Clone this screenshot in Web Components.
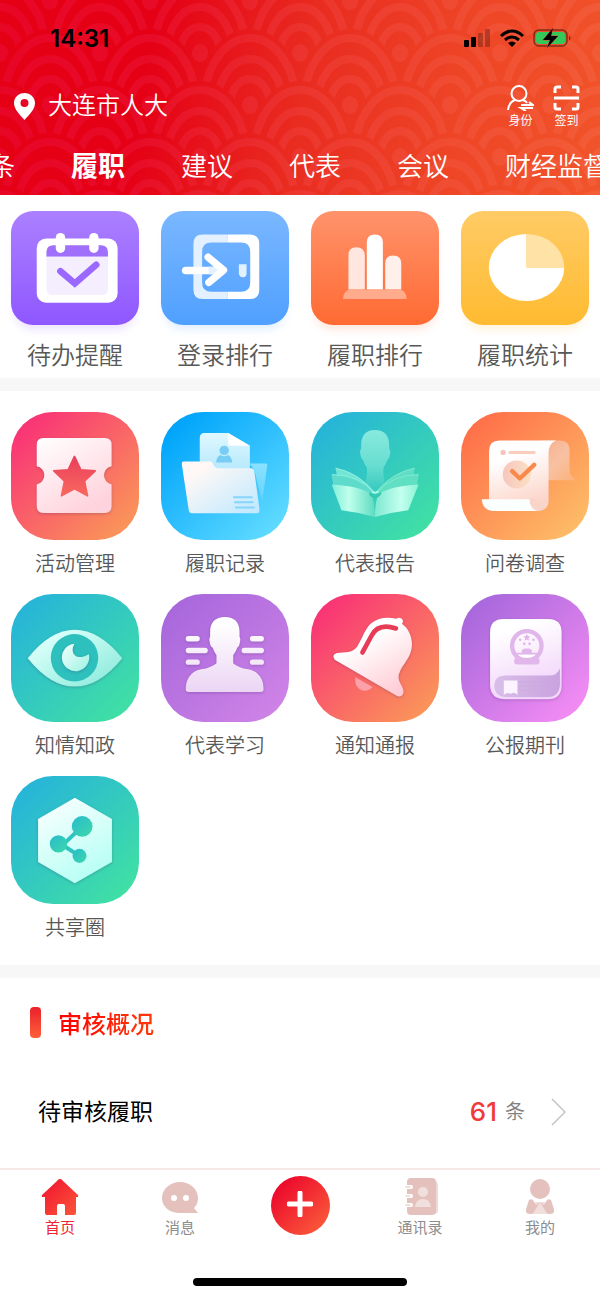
<!DOCTYPE html>
<html lang="zh-CN">
<head>
<meta charset="utf-8">
<meta name="viewport" content="width=device-width, initial-scale=1">
<title>大连市人大</title>
<style>
  body {
    margin: 0;
    background: #fff;
    color: #585858;
    font-family: "Inter", "Noto Sans CJK SC", sans-serif;
  }
</style>
</head>
<body>
<home-page></home-page>

<script>
// Tile artwork. Each entry has its own view box, tile colours and drawing.
const ICONS = {
  todo: {
    box: "34 32 383 343", from: "#ab80ff", to: "#8f57ff",
    art: `
      <rect x="111" y="115" width="242" height="193" rx="28" fill="#fff"/>
      <path d="M140 170v-14q0-21 21-21h142q21 0 21 21v14z" fill="#a06ffc"/>
      <path d="M140 170h184v96q0 19-19 19H159q-19 0-19-19z" fill="#f4eeff"/>
      <rect x="168" y="98" width="28" height="60" rx="14" fill="#fff"/>
      <rect x="268" y="98" width="28" height="60" rx="14" fill="#fff"/>
      <path d="M182 213l43 37 64-56" fill="none" stroke="#9b69ff" stroke-width="20" stroke-linecap="round"/>`
  },
  login: {
    box: "484 32 383 343", from: "#7ab7ff", to: "#4fa0ff",
    art: `
      <path fill-rule="evenodd" d="M684 103h-75q-28 0-28 28v138q0 28 28 28h75v-22h-49q-28 0-28-28v-92q0-28 28-28h49z" fill="#e3f0ff"/>
      <path d="M684 103h66q28 0 28 28v138q0 28-28 28h-66v-22h39q28 0 28-28v-92q0-28-28-28h-39z" fill="#fff"/>
      <path d="M558 211h105" stroke="#fff" stroke-width="23" stroke-linecap="round"/>
      <path d="M626 211h30" stroke="#e3f0ff" stroke-width="23"/>
      <path d="M625 171l46 39-44 37" fill="none" stroke="#fff" stroke-width="22" stroke-linecap="round" stroke-linejoin="round"/>
      <path d="M717 192h23v28q0 11-11 11t-12-11z" fill="#e3f0ff"/>`
  },
  rank: {
    box: "34 32 383 343", from: "#ff936b", to: "#ff6a33",
    art: `
      <path d="M146 268V165q0-24 24-24t25 24v103z" fill="#ffe7e0"/>
      <path d="M201 268V127q0-24 24-24t24 24v141z" fill="#fff"/>
      <path d="M256 268v-78q0-24 24-24t24 24v78z" fill="#fff0eb"/>
      <path d="M130 297q0-29 26-29h138q26 0 26 29z" fill="#ffab8c"/>`
  },
  stats: {
    box: "484 32 383 343", from: "#ffcb66", to: "#ffbb30",
    art: `
      <path d="M680 202V101A113 101 0 1 0 793 202z" fill="#fff"/>
      <path d="M680 202V101A113 101 0 0 1 793 202z" fill="#ffe2a6"/>`
  },
  ticket: {
    box: "34 36 383 383", from: "#f93476", to: "#fa9459",
    art: `
      <defs>
        <linearGradient id="a" x1="0" y1="0" x2=".6" y2="1"><stop stop-color="#fff"/><stop offset="1" stop-color="#ffd3dd"/></linearGradient>
        <linearGradient id="b" x1="0" y1="0" x2="0" y2="1"><stop stop-color="#ea3f5b"/><stop offset="1" stop-color="#f8685f"/></linearGradient>
      </defs>
      <path class="lift" d="M131 114h184q20 0 20 20v64a28 28 0 0 0 0 55v65q0 20-20 20H131q-20 0-20-20v-65a28 28 0 0 0 0-55v-64q0-20 20-20z" fill="url(#a)"/>
      <path d="M224 169l19 40 43 3-32 31 9 44-39-21-39 21 9-44-32-31 43-3z" fill="url(#b)" stroke="url(#b)" stroke-width="5" stroke-linejoin="round"/>`
  },
  folder: {
    box: "484 36 383 383", from: "#00a4fb", to: "#5edaff",
    art: `
      <defs>
        <linearGradient id="a" x1="0" y1="0" x2="1" y2="1"><stop offset=".2" stop-color="#fff8f6"/><stop offset="1" stop-color="#bde8ff"/></linearGradient>
        <linearGradient id="b" x1="0" y1="0" x2="0" y2="1"><stop stop-color="#dff8ff"/><stop offset="1" stop-color="#b4e8fd"/></linearGradient>
        <linearGradient id="c" x1="0" y1="0" x2="0" y2="1"><stop stop-color="#8be2ff"/><stop offset="1" stop-color="#63d0fc"/></linearGradient>
      </defs>
      <path d="M749 190h49q5 0 4 6l-15 109-24-96z" fill="url(#c)"/>
      <path d="M600 215V113q0-14 14-14h71l65 38v80z" fill="url(#b)"/>
      <path d="M685 99l65 38h-60q-5 0-5-5z" fill="#fff"/>
      <circle cx="673" cy="151" r="14" fill="#78cdf4"/>
      <path d="M649 187q1-17 13-22 11 7 22 0 12 5 13 22z" fill="#78cdf4"/>
      <path d="M552 184h78q7 0 9 6 5 14 18 14h97q8 0 9 8l16 117q0 10-9 10H577q-9 0-10-9l-21-139q0-7 6-7z" fill="url(#a)"/>
      <path d="M700 291h58M703 306h58M706 322h58" stroke="#86d5fb" stroke-width="6"/>`
  },
  report: {
    box: "34 36 383 383", from: "#27b5d8", to: "#40dfa5",
    art: `
      <defs>
        <linearGradient id="a" x1="0" y1="0" x2="0" y2="1"><stop stop-color="#88eadf"/><stop offset=".6" stop-color="#66dcd0"/><stop offset="1" stop-color="#35c9be"/></linearGradient>
        <linearGradient id="b" x1="0" y1="0" x2="1" y2="0"><stop stop-color="#81efd9"/><stop offset=".4" stop-color="#c0ffec"/><stop offset="1" stop-color="#5edcc1"/></linearGradient>
        <linearGradient id="c" x1="0" y1="0" x2="1" y2="0"><stop stop-color="#7de9d2"/><stop offset=".6" stop-color="#c4ffee"/><stop offset="1" stop-color="#88f3d3"/></linearGradient>
      </defs>
      <path d="M225 90c29 0 43 17 43 45v12q5 4 2 17-1 12-8 16-3 12-11 22-2 22 2 35 7 17-27 38-34-21-27-38 4-13 2-35-8-10-11-22-7-4-8-16-3-13 2-17v-12c0-28 14-45 41-45z" fill="url(#a)"/>
      <path d="M107 203q67 14 113 69l-8 10-97-40z" fill="#72e6d4"/>
      <path d="M345 203q-67 14-113 69l8 10 97-40z" fill="#60dec4"/>
      <path d="M95 222q80 2 126 54l-10 14-110-35z" fill="#5edbca"/>
      <path d="M357 222q-80 2-126 54l10 14 110-35z" fill="#61dfc3"/>
      <path d="M97 223q80 2 125 54M108 204q67 14 113 69" fill="none" stroke="#a2f6e9" stroke-width="2"/>
      <path d="M355 223q-80 2-125 54M344 204q-67 14-113 69" fill="none" stroke="#8df2d9" stroke-width="2"/>
      <path d="M96 253q82 5 116 27 12 12 13 70-50-14-100-20z" fill="url(#b)"/>
      <path d="M356 253q-82 5-116 27-14 12-15 70 50-14 100-20z" fill="url(#c)"/>
      <path d="M211 277q1 12 14 12t17-12" fill="none" stroke="#35c8ac" stroke-width="7"/>
      <path d="M217 274q8 7 18 0" fill="none" stroke="#b9fff0" stroke-width="6"/>`
  },
  survey: {
    box: "484 36 383 383", from: "#ff704a", to: "#fdbb66",
    art: `
      <defs>
        <linearGradient id="a" x1="0" y1="0" x2=".3" y2="1"><stop offset=".3" stop-color="#fff"/><stop offset="1" stop-color="#fcd5ca"/></linearGradient>
        <linearGradient id="b" x1="0" y1="0" x2="1" y2="1"><stop stop-color="#f5ae8c"/><stop offset=".5" stop-color="#f8c1a2"/><stop offset="1" stop-color="#fdb077"/></linearGradient>
        <linearGradient id="c" x1="0" y1="0" x2="1" y2="0"><stop stop-color="#f7c6be"/><stop offset="1" stop-color="#fbe0c4"/></linearGradient>
      </defs>
      <path d="M720 121h60q29 0 29 30v56q0 25 24 33h-88z" fill="url(#b)"/>
      <path d="M568 298V152q0-31 31-31h170q-23 8-23 38v140q0 33-34 33h-72z" fill="url(#a)"/>
      <path d="M546 297h143q0 25 23 35H578q-29-2-32-35z" fill="#fbfffd"/>
      <path d="M690 297q2 34 25 34 29-1 31-31-26 17-40-3-8-6-16 0z" fill="#f9d4c9"/>
      <circle cx="610" cy="157" r="8" fill="#f9c4bb"/>
      <path d="M630 157h73" stroke="#f9cebd" stroke-width="9" stroke-linecap="round"/>
      <circle cx="651" cy="223" r="42" fill="url(#c)"/>
      <path d="M637 213l23 22 43-41" fill="none" stroke="#f88a4d" stroke-width="13" stroke-linecap="round" stroke-linejoin="round"/>`
  },
  eye: {
    box: "34 25 383 383", from: "#27b5d8", to: "#40dfa5",
    art: `
      <defs>
        <linearGradient id="a" x1="0" y1="0" x2="1" y2="1"><stop offset=".2" stop-color="#d8fff9"/><stop offset="1" stop-color="#82e8d8"/></linearGradient>
        <linearGradient id="b" x1="0" y1="0" x2="1" y2="1"><stop stop-color="#f3ffff"/><stop offset="1" stop-color="#9df3e1"/></linearGradient>
      </defs>
      <path class="lift" d="M84 217q68-85 141-85t142 85q-69 85-142 85T84 217z" fill="url(#a)"/>
      <circle cx="224" cy="216" r="71" fill="#2dc0bd"/>
      <path class="lift" d="M224 174q-12 21 1 34t42-3a41 41 0 1 1-43-31z" fill="url(#b)"/>`
  },
  study: {
    box: "484 25 383 383", from: "#a868dc", to: "#ce82e6",
    art: `
      <defs>
        <linearGradient id="a" gradientUnits="userSpaceOnUse" x1="0" y1="95" x2="0" y2="318"><stop offset=".1" stop-color="#fff"/><stop offset="1" stop-color="#ebd5f4"/></linearGradient>
      </defs>
      <g class="lift" fill="url(#a)">
        <path d="M675 94c29 0 44 16 44 44v15q4 5 1 17-1 12-8 16-3 11-12 22v24q15 14 45 18c33 6 46 31 46 60q0 8-8 8H566q-8 0-8-8c0-29 14-54 46-60q30-4 46-18v-24q-9-11-11-22-8-4-9-16-3-12 1-17v-15c0-28 16-44 44-44z"/>
        <rect x="558" y="151" width="42" height="16" rx="8"/><rect x="750" y="151" width="42" height="16" rx="8"/>
        <rect x="558" y="186" width="66" height="16" rx="8"/><rect x="725" y="186" width="67" height="16" rx="8"/>
        <rect x="558" y="221" width="42" height="16" rx="8"/><rect x="750" y="221" width="42" height="16" rx="8"/>
      </g>`
  },
  bell: {
    box: "34 25 383 383", from: "#f93476", to: "#fa9459",
    art: `
      <defs>
        <linearGradient id="a" x1=".2" y1="0" x2=".8" y2="1"><stop offset=".3" stop-color="#fff"/><stop offset="1" stop-color="#ffc9d3"/></linearGradient>
      </defs>
      <path d="M167 274l51 29q-15 16-34 9-22-11-17-38z" fill="#fca0aa"/>
      <path class="lift" d="M110 202c28-3 48 0 62-19 17-28 23-53 43-71 20-17 48-19 74-13q12-7 19 3 3 7-2 12c21 15 31 40 30 66-2 37-29 54-39 85-7 23 18 37 13 57q-5 15-21 7L105 222q-10-15 5-20z" fill="url(#a)"/>
      <path d="M188 200l27-50c13-26 38-33 73-22" fill="none" stroke="#e73c55" stroke-width="14" stroke-linecap="round"/>`
  },
  gazette: {
    box: "484 25 383 383", from: "#a868dc", to: "#f28bf3",
    art: `
      <defs>
        <linearGradient id="a" x1="0" y1="0" x2=".3" y2="1"><stop offset=".2" stop-color="#fff"/><stop offset="1" stop-color="#f2d4fa"/></linearGradient>
        <linearGradient id="b" x1="0" y1="0" x2="1" y2="0"><stop stop-color="#d9bee9"/><stop offset="1" stop-color="#c9a2de"/></linearGradient>
      </defs>
      <path class="lift" d="M612 100h132q41 0 41 40v158q0 42-41 42H617q-46 0-46-44V140q0-40 41-40z" fill="url(#a)"/>
      <path d="M780 247v50q-4 36-36 36H615q-30-3-32-33 2-31 32-31h132q26 0 33-22z" fill="url(#b)"/>
      <path d="M655 288h120M655 300h120M655 312h120" stroke="#caaadf" stroke-width="2"/>
      <path d="M612 284h41v43q-11-12-20-3-10-7-21 3z" fill="#fbf3ff"/>
      <circle cx="681" cy="180" r="44" fill="none" stroke="#e1b6ea" stroke-width="13"/>
      <path d="M651 216h60q8 0 8 9v3q0 8-8 8h-60q-8 0-8-8v-3q0-9 8-9z" fill="#e1b6ea"/>
      <path d="M653 206q27 20 56 0z" fill="#fff"/>
      <g fill="#e1b6ea">
        <path d="M681 144l3 7 8 1-6 5 2 8-7-4-7 4 2-8-6-5 8-1z"/>
        <circle cx="661" cy="162" r="4"/><circle cx="701" cy="162" r="4"/><circle cx="673" cy="174" r="4"/><circle cx="689" cy="174" r="4"/>
        <path d="M650 206v-5h16v-10h6v-3h18v3h6v10h16v5z"/>
      </g>`
  },
  share: {
    box: "34 30 383 383", from: "#27b5d8", to: "#40dfa5",
    art: `
      <defs>
        <linearGradient id="a" x1="0" y1="0" x2=".5" y2="1"><stop stop-color="#fff"/><stop offset="1" stop-color="#b9fff5"/></linearGradient>
        <linearGradient id="b" x1="0" y1="0" x2="1" y2="1"><stop stop-color="#2abacd"/><stop offset="1" stop-color="#3cd9aa"/></linearGradient>
      </defs>
      <path class="lift" d="M225 95l111 64v128l-111 64-110-64V159z" fill="url(#a)"/>
      <path d="M192 233L247 181M190 238l49 31" stroke="#2fc4c0" stroke-width="12"/>
      <g fill="url(#b)"><circle cx="247" cy="181" r="31"/><circle cx="176" cy="233" r="26"/><circle cx="239" cy="269" r="21"/></g>`
  }
};

const NAV_ICONS = {
  home: `
    <defs><linearGradient id="g" x1="0" y1="0" x2="1" y2="1"><stop stop-color="#f01030"/><stop offset="1" stop-color="#fb5838"/></linearGradient></defs>
    <path d="M19 1q2 0 3 2l15 14q1 2-1 2h-1v16q0 2-2 2h-9V28q0-2-2-2h-4q-2 0-2 2v9H7q-3 0-3-2V19H2q-2 0-1-2L16 3q1-2 3-2z" fill="url(#g)"/>`,
  chat: `
    <path d="M19 4c10 0 18 7 18 16q0 6-4 10l4 5H19C9 35 1 29 1 20S9 4 19 4z" fill="#e4c1bd"/>
    <circle cx="13" cy="20" r="3" fill="#fff"/><circle cx="25" cy="20" r="3" fill="#fff"/>`,
  contacts: `
    <path d="M10 3h23q4 0 4 4v25q0 4-4 4H10z" fill="#eed9d6"/>
    <rect x="6" width="29" height="37" rx="4" fill="#e4c1bd"/>
    <circle cx="22" cy="14" r="5" fill="#f1dfdd"/><path d="M14 29q1-8 8-8t8 8z" fill="#f1dfdd"/>
    <path d="M5 9h5M5 18h5M5 27h5" stroke="#fff" stroke-width="4" stroke-linecap="round"/>
    <path d="M5 9h4M5 18h4M5 27h4" stroke="#e4c1bd" stroke-linecap="round"/>`,
  me: `
    <path d="M14 24h11l5 12H9z" fill="#f1dfdd"/>
    <circle cx="19" cy="11" r="10" fill="#e4c1bd"/>
    <path d="M8 22q4-2 5 2l2 3 4-3-6 10q-1 2-4 2-5 0-4-5zM30 22q-4-2-5 2l-2 3-4-3 6 10q1 2 4 2 5 0 4-5z" fill="#e4c1bd"/>`
};

class StatusBar extends HTMLElement {
  constructor() {
    super();
    this.attachShadow({ mode: "open" }).innerHTML = `
      <style>
        :host {
          display: flex;
          align-items: center;
          justify-content: space-between;
          height: 76px;
          padding: 0 28px 0 50px;
          color: #000;
        }
        .time { font-size: 24px; font-weight: 600; }
        .signals { display: flex; align-items: center; gap: 8px; }
        svg { display: block; }
      </style>
      <span class="time"><slot></slot></span>
      <div class="signals">
        <svg width="27" height="18" viewBox="0 0 27 18">
          <rect y="11" width="5" height="7" rx="1"/><rect x="7" y="8" width="5" height="10" rx="1"/>
          <rect x="14" y="4" width="5" height="14" rx="1" opacity=".25"/><rect x="21" width="5" height="18" rx="1" opacity=".25"/>
        </svg>
        <svg width="26" height="18" viewBox="0 0 26 18">
          <path d="M2 7Q13-3 24 7M6 11q7-6 14 0" fill="none" stroke="#000" stroke-width="3"/>
          <path d="M9 14q4-3 8 0l-4 4z"/>
        </svg>
        <svg width="39" height="20" viewBox="0 0 39 20">
          <rect x="1" y="2" width="33" height="16" rx="5" fill="none" stroke="#000" stroke-opacity=".45" stroke-width="1.5"/>
          <rect x="3" y="4" width="29" height="12" rx="3" fill="#34c759"/>
          <path d="M36 8q3 2 0 5z" opacity=".5"/>
          <path d="M20 0L10 12h7l-3 8 11-12h-7z" stroke="#e94a28" stroke-width="1" paint-order="stroke"/>
        </svg>
      </div>
    `;
  }
}

class AppHeader extends HTMLElement {
  constructor() {
    super();
    // one wave scale: a dark ellipse hides the row behind, then the light rings
    const scale = (x, y) => `
      <g transform="translate(${x} ${y})">
        <ellipse rx="54" ry="76" fill="#000"/>
        <g fill="none" stroke="#fff" stroke-width="8">
          <ellipse rx="46" ry="67"/><ellipse rx="33" ry="46"/><ellipse rx="20" ry="26"/>
        </g>
        <ellipse rx="8" ry="9" fill="#fff"/>
      </g>`;
    let scales = "";
    for (let row = 0; row < 6; row++) {
      for (let x = row % 2 ? 0 : 50; x <= 1500; x += 100) scales += scale(x, row * 52 + 1);
    }

    this.attachShadow({ mode: "open" }).innerHTML = `
      <style>
        :host {
          display: grid;
          overflow: hidden;
          background: linear-gradient(100deg, #e50015 0%, #e50016 25%, #e92b20 50%, #ee4526 75%, #f1542a 100%);
          color: #fff;
        }
        .waves, .content { grid-area: 1 / 1; min-width: 0; }
        .waves { width: 100%; height: 0; min-height: 100%; }
        .place {
          display: flex;
          align-items: center;
          justify-content: space-between;
          height: 60px;
          padding: 0 20px 0 14px;
        }
        .city { display: flex; align-items: center; gap: 13px; font-size: 24px; font-weight: 350; line-height: 32px; }
        .actions { display: flex; gap: 19px; }
        button {
          display: grid;
          justify-items: center;
          row-gap: 2px;
          padding: 0;
          border: 0;
          background: none;
          color: inherit;
          font: 12px/14px "Noto Sans CJK SC", sans-serif;
          cursor: pointer;
        }
        svg { display: block; }
      </style>
      <svg class="waves" aria-hidden="true">
        <defs>
          <mask id="m" maskUnits="userSpaceOnUse" x="0" y="0" width="1500" height="300">${scales}</mask>
          <linearGradient id="w"><stop offset="0" stop-color="#ff2890"/><stop offset=".5" stop-color="#ff7080"/><stop offset="1" stop-color="#ff9080"/></linearGradient>
        </defs>
        <g mask="url(#m)" opacity=".15"><rect width="100%" height="100%" fill="url(#w)"/></g>
      </svg>
      <div class="content">
        <status-bar>14:31</status-bar>
        <div class="place">
          <span class="city">
            <svg width="21" height="27" viewBox="0 0 21 27"><path fill="#fff" fill-rule="evenodd" d="M10.500 0C16.500 0 21 4.500 21 10c0 6-5 11-10.500 17C5 21 0 16 0 10 0 4.500 4.500 0 10.500 0zm0 6a4 4 0 1 0 0 8 4 4 0 0 0 0-8z"/></svg>
            <slot></slot>
          </span>
          <div class="actions">
            <button type="button">
              <svg width="27" height="26" viewBox="0 0 27 26" fill="none" stroke="#fff" stroke-width="2">
                <circle cx="12" cy="8.500" r="7.500"/><path d="M1 25q1-8 7-10M16 15q3 1 4 3M14 20h12l-4-3M26 23H14l5 3"/>
              </svg>
              身份
            </button>
            <button type="button">
              <svg width="27" height="26" viewBox="0 0 27 26" fill="none" stroke="#fff" stroke-width="3">
                <path d="M2 8V4q0-2 2-2h4M19 2h4q2 0 2 2v4M2 18v4q0 2 2 2h4M19 24h4q2 0 2-2v-4M1 13h25"/>
              </svg>
              签到
            </button>
          </div>
        </div>
        <slot name="tabs"></slot>
      </div>
    `;
  }
}

class SectionTabs extends HTMLElement {
  constructor() {
    super();
    this.attachShadow({ mode: "open" }).innerHTML = `
      <style>
        :host { display: block; overflow: hidden; }
        nav {
          display: flex;
          align-items: center;
          gap: 56px;
          height: 57px;
          margin-left: -11px;
          padding-bottom: 2px;
        }
        a {
          flex: none;
          color: inherit;
          font-size: 26px;
          font-weight: 350;
          text-decoration: none;
        }
        a.active { font-size: 27px; font-weight: 700; }
      </style>
      <nav></nav>
    `;
  }

  connectedCallback() {
    const active = this.getAttribute("active");
    this.shadowRoot.querySelector("nav").innerHTML = this.getAttribute("items")
      .split(",")
      .map((name) => `<a href="#"${name === active ? ' class="active"' : ""}>${name}</a>`)
      .join("");
  }
}

class TileGrid extends HTMLElement {
  constructor() {
    super();
    this.attachShadow({ mode: "open" }).innerHTML = `
      <style>
        :host {
          display: grid;
          grid-template-columns: repeat(4, 1fr);
          row-gap: 14px;
          padding: 21px 0;
          border-bottom: 13px solid #f7f7f7;
        }
        :host([quick]) { padding: 16px 0 6px; }
      </style>
      <slot></slot>
    `;
  }
}

class AppTile extends HTMLElement {
  constructor() {
    super();
    this.attachShadow({ mode: "open" });
  }

  connectedCallback() {
    const icon = ICONS[this.getAttribute("icon")];
    this.shadowRoot.innerHTML = `
      <style>
        :host { display: block; }
        a {
          display: grid;
          justify-items: center;
          gap: 8px;
          color: inherit;
          font-size: 20px;
          font-weight: 350;
          line-height: 32px;
          text-decoration: none;
        }
        svg {
          display: block;
          width: 128px;
          height: 128px;
          border-radius: 42px;
          background: linear-gradient(135deg, ${icon.from} 10%, ${icon.to} 90%);
        }
        .lift { filter: drop-shadow(0 3px 5px rgba(60, 30, 90, .25)); }
        :host([quick]) a { gap: 15px; font-size: 24px; }
        :host([quick]) svg {
          height: 114px;
          border-radius: 22px;
          background: linear-gradient(${icon.from}, ${icon.to});
          box-shadow: 0 8px 10px -4px ${icon.to}30;
        }
      </style>
      <a href="#">
        <svg viewBox="${icon.box}" preserveAspectRatio="none" aria-hidden="true">${icon.art}</svg>
        <span><slot></slot></span>
      </a>
    `;
  }
}

class AuditPanel extends HTMLElement {
  constructor() {
    super();
    this.attachShadow({ mode: "open" }).innerHTML = `
      <style>
        :host { display: block; padding: 29px 30px 27px; }
        h2 {
          display: flex;
          align-items: flex-start;
          gap: 17px;
          margin: 0 0 40px;
          font-size: 24px;
          font-weight: 500;
          line-height: 36px;
        }
        h2::before {
          content: "";
          width: 11px;
          height: 31px;
          border-radius: 4px;
          background: linear-gradient(#ea202c, #ff6038);
        }
        h2 span {
          background: linear-gradient(90deg, #f00, #ff3a08);
          background-clip: text;
          -webkit-background-clip: text;
          color: transparent;
        }
      </style>
      <h2><span><slot name="title"></slot></span></h2>
      <slot></slot>
    `;
  }
}

class AuditRow extends HTMLElement {
  constructor() {
    super();
    this.attachShadow({ mode: "open" }).innerHTML = `
      <style>
        :host { display: block; }
        a {
          display: flex;
          align-items: center;
          height: 58px;
          padding: 0 4px 0 8px;
          color: #000;
          font-size: 23px;
          line-height: 32px;
          text-decoration: none;
        }
        .count { margin-left: auto; color: #f23a3a; font-size: 26px; font-weight: 500; }
        .unit { margin: 0 26px 0 8px; color: #808080; font-size: 20px; font-weight: 350; }
      </style>
      <a href="#">
        <span><slot></slot></span>
        <span class="count"></span>
        <span class="unit">条</span>
        <svg width="15" height="28" viewBox="0 0 15 28"><path d="M1 1l13 13L1 27" fill="none" stroke="#c4c4c4" stroke-width="1.500"/></svg>
      </a>
    `;
  }

  connectedCallback() {
    this.shadowRoot.querySelector(".count").textContent = this.getAttribute("count");
  }
}

class NavItem extends HTMLElement {
  constructor() {
    super();
    this.attachShadow({ mode: "open" });
  }

  connectedCallback() {
    this.shadowRoot.innerHTML = `
      <style>
        :host { display: block; color: #8c8c8c; }
        :host([active]) { color: #f02433; }
        a {
          display: grid;
          justify-items: center;
          padding-top: 8px;
          color: inherit;
          font-size: 15px;
          line-height: 24px;
          text-decoration: none;
        }
        svg { display: block; }
      </style>
      <a href="#">
        <svg width="38" height="38" viewBox="0 0 38 38" aria-hidden="true">${NAV_ICONS[this.getAttribute("icon")]}</svg>
        <slot></slot>
      </a>
    `;
  }
}

class BottomNav extends HTMLElement {
  constructor() {
    super();
    this.attachShadow({ mode: "open" }).innerHTML = `
      <style>
        :host { display: block; border-top: 2px solid #f7e9e8; background: #fff; }
        nav { display: grid; grid-template-columns: repeat(5, 1fr); }
        button {
          justify-self: center;
          width: 59px;
          height: 59px;
          margin-top: 6px;
          padding: 0;
          border: 0;
          border-radius: 50%;
          background: linear-gradient(135deg, #ec0a2c 15%, #fb5a3a 90%);
          cursor: pointer;
        }
        .indicator {
          width: 214px;
          height: 8px;
          margin: 38px auto 12px;
          border-radius: 4px;
          background: #000;
        }
      </style>
      <nav>
        <nav-item icon="home" active>首页</nav-item>
        <nav-item icon="chat">消息</nav-item>
        <button type="button" aria-label="新建">
          <svg width="26" height="26" viewBox="0 0 26 26"><path d="M13 2v22M2 13h22" stroke="#fff" stroke-width="5" stroke-linecap="round"/></svg>
        </button>
        <nav-item icon="contacts">通讯录</nav-item>
        <nav-item icon="me">我的</nav-item>
      </nav>
      <div class="indicator"></div>
    `;
  }
}

class HomePage extends HTMLElement {
  constructor() {
    super();
    this.attachShadow({ mode: "open" }).innerHTML = `
      <style>
        :host { display: flex; flex-direction: column; min-height: 100vh; }
        main { flex: 1; }
      </style>
      <app-header>
        大连市人大
        <section-tabs slot="tabs" items="条,履职,建议,代表,会议,财经监督" active="履职"></section-tabs>
      </app-header>
      <main>
        <tile-grid quick>
          <app-tile quick icon="todo">待办提醒</app-tile>
          <app-tile quick icon="login">登录排行</app-tile>
          <app-tile quick icon="rank">履职排行</app-tile>
          <app-tile quick icon="stats">履职统计</app-tile>
        </tile-grid>
        <tile-grid>
          <app-tile icon="ticket">活动管理</app-tile>
          <app-tile icon="folder">履职记录</app-tile>
          <app-tile icon="report">代表报告</app-tile>
          <app-tile icon="survey">问卷调查</app-tile>
          <app-tile icon="eye">知情知政</app-tile>
          <app-tile icon="study">代表学习</app-tile>
          <app-tile icon="bell">通知通报</app-tile>
          <app-tile icon="gazette">公报期刊</app-tile>
          <app-tile icon="share">共享圈</app-tile>
        </tile-grid>
        <audit-panel>
          <span slot="title">审核概况</span>
          <audit-row count="61">待审核履职</audit-row>
        </audit-panel>
      </main>
      <bottom-nav></bottom-nav>
    `;
  }
}

customElements.define("status-bar", StatusBar);
customElements.define("section-tabs", SectionTabs);
customElements.define("app-header", AppHeader);
customElements.define("app-tile", AppTile);
customElements.define("tile-grid", TileGrid);
customElements.define("audit-row", AuditRow);
customElements.define("audit-panel", AuditPanel);
customElements.define("nav-item", NavItem);
customElements.define("bottom-nav", BottomNav);
customElements.define("home-page", HomePage);
</script>
</body>
</html>
